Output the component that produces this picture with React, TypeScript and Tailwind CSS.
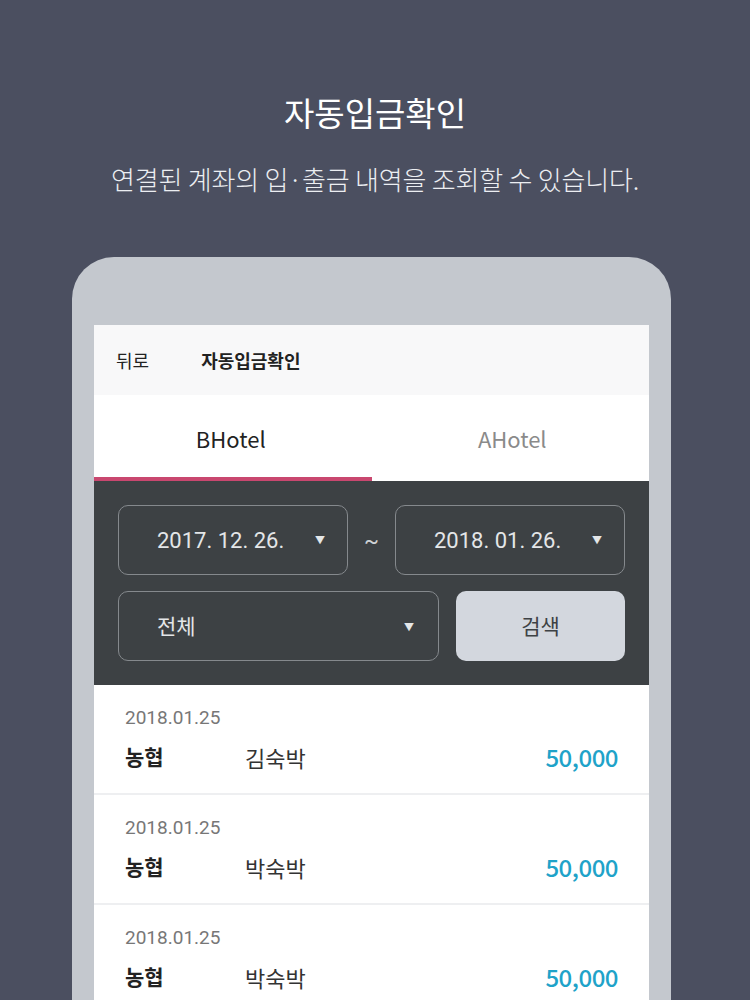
const rows = [
  { date: '2018.01.25', bank: '농협', name: '김숙박', amount: '50,000' },
  { date: '2018.01.25', bank: '농협', name: '박숙박', amount: '50,000' },
  { date: '2018.01.25', bank: '농협', name: '박숙박', amount: '50,000' },
];

function Caret() {
  return <span className="text-[10px] text-[#e4e6e8]">▼</span>;
}

export default function App() {
  return (
    <div
      className="h-[1000px] w-[750px] overflow-hidden bg-[#4b4f60]"
      style={{ fontFamily: '"Noto Sans CJK KR", "Noto Sans", sans-serif' }}
    >
      <div className="flex flex-col items-center pt-[88px]">
        <h1 className="text-[33px] leading-[48px] font-normal text-white">자동입금확인</h1>
        <p className="mt-[24px] text-[26px] leading-[38px] font-light tracking-[-0.2px] text-[#eceef2]">
          연결된 계좌의 입·출금 내역을 조회할 수 있습니다.
        </p>
      </div>

      <div className="ml-[72px] mt-[59px] h-[800px] w-[599px] rounded-t-[42px] bg-[#c4c8ce] px-[22px] pt-[68px]">
        <div className="flex h-full flex-col bg-white">
          <div className="flex h-[70px] items-center bg-[#f8f8f9] px-[22px] text-[18px] text-[#222]">
            <span>뒤로</span>
            <span className="ml-[52px] font-bold">자동입금확인</span>
          </div>

          <div className="flex h-[86px]">
            <div className="relative flex flex-1 items-center justify-center text-[22px] text-[#222]">
              <span className="pr-[4px]">BHotel</span>
              <div className="absolute bottom-0 left-0 right-0 h-[4px] bg-[#c9476f]" />
            </div>
            <div className="flex flex-1 items-center justify-center text-[22px] text-[#8a8a8a]">
              <span className="pl-[4px]">AHotel</span>
            </div>
          </div>

          <div
            className="flex flex-col gap-[16px] bg-[#3d4144] px-[24px] py-[24px]"
            style={{ fontFamily: 'Roboto, "Noto Sans CJK KR", sans-serif' }}
          >
            <div className="flex items-center">
              <div className="flex h-[70px] w-[230px] items-center justify-between rounded-[10px] border border-[#85898d] pl-[38px] pr-[22px] text-[22px] text-[#e4e6e8]">
                <span>2017. 12. 26.</span>
                <Caret />
              </div>
              <span className="flex-1 text-center text-[22px] text-[#cfd2d5]">~</span>
              <div className="flex h-[70px] w-[230px] items-center justify-between rounded-[10px] border border-[#85898d] pl-[38px] pr-[22px] text-[22px] text-[#e4e6e8]">
                <span>2018. 01. 26.</span>
                <Caret />
              </div>
            </div>
            <div className="flex items-center gap-[17px]">
              <div
                className="flex h-[70px] flex-1 items-center justify-between rounded-[10px] border border-[#85898d] pl-[38px] pr-[24px] text-[21px] text-[#e4e6e8]"
                style={{ fontFamily: '"Noto Sans CJK KR", sans-serif' }}
              >
                <span>전체</span>
                <Caret />
              </div>
              <div
                className="flex h-[70px] w-[169px] items-center justify-center rounded-[10px] bg-[#d3d7de] text-[21px] text-[#3d4144]"
                style={{ fontFamily: '"Noto Sans CJK KR", sans-serif' }}
              >
                검색
              </div>
            </div>
          </div>

          <div className="flex flex-col">
            {rows.map((r, i) => (
              <div key={i} className="flex h-[110px] flex-col border-b-2 border-[#eeeff1] pl-[31px] pr-[31px] pt-[20px]">
                <div
                  className="text-[19px] leading-[26px] text-[#777]"
                  style={{ fontFamily: 'Roboto, sans-serif' }}
                >
                  {r.date}
                </div>
                <div className="mt-[8px] flex items-center">
                  <span className="w-[120px] text-[21px] font-bold text-[#222]">{r.bank}</span>
                  <span className="text-[22px] text-[#333]">{r.name}</span>
                  <span className="ml-auto text-[24px] font-medium tracking-[-0.5px] text-[#1fa3c9]">
                    {r.amount}
                  </span>
                </div>
              </div>
            ))}
          </div>
        </div>
      </div>
    </div>
  );
}
